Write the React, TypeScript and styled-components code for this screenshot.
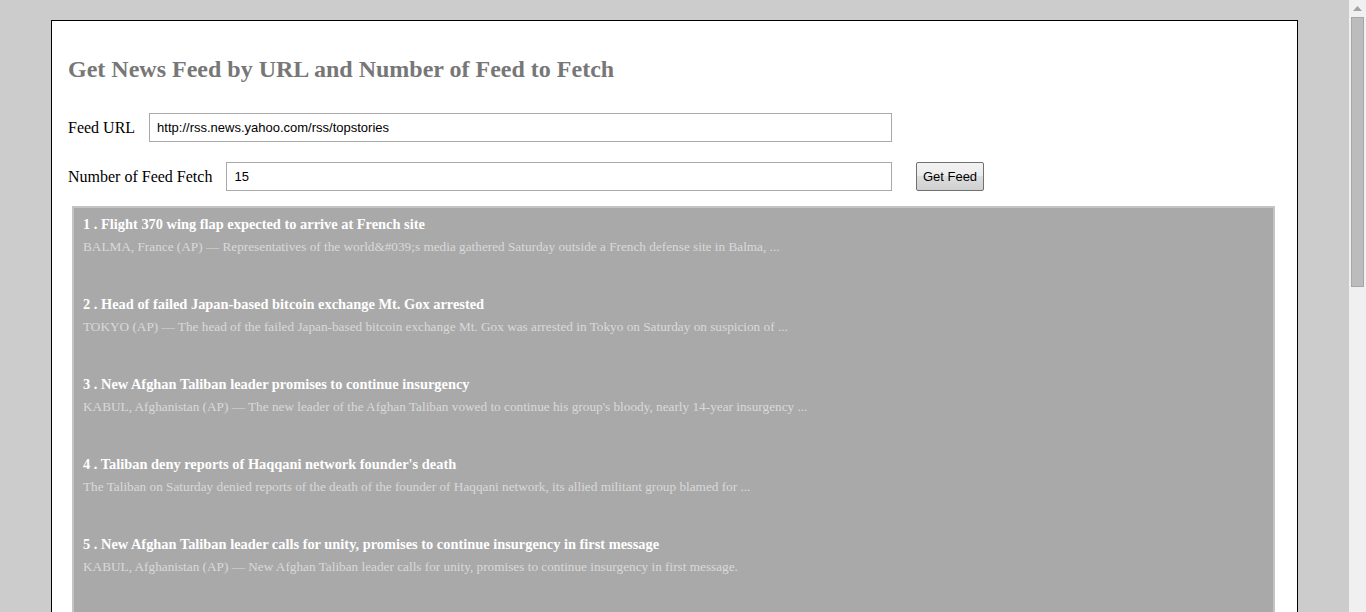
import React from "react";
import styled, { createGlobalStyle } from "styled-components";

const Global = createGlobalStyle`
  html, body { margin: 0; padding: 0; height: 612px; overflow: hidden; }
  body { font-family: "Liberation Serif", "Times New Roman", serif; }
`;

const Page = styled.div`
  display: flex;
  height: 612px;
  background: #cccccc;
  overflow: hidden;
`;

const Main = styled.div`
  flex: 1;
  display: flex;
  padding: 20px 51px 0 51px;
  min-width: 0;
`;

const Container = styled.div`
  flex: 1;
  background: #ffffff;
  border: 1px solid #000000;
  border-bottom: none;
  padding: 34px 22px 0 16px;
  display: flex;
  flex-direction: column;
  min-width: 0;
`;

const Heading = styled.h2`
  margin: 0 0 30px 0;
  font-size: 24px;
  line-height: 28px;
  font-weight: bold;
  color: #777777;
`;

const FormRow = styled.div<{ $mb?: number }>`
  display: flex;
  align-items: center;
  margin-bottom: ${(p) => p.$mb ?? 0}px;
`;

const Fields = styled.div<{ $gap: number }>`
  width: 824px;
  display: flex;
  align-items: center;
  gap: ${(p) => p.$gap}px;
`;

const Label = styled.label`
  font-size: 16px;
  color: #000;
  white-space: nowrap;
`;

const TextInput = styled.input`
  flex: 1;
  height: 29px;
  box-sizing: border-box;
  border: 1px solid #a9a9a9;
  padding: 0 7px;
  font-family: "Liberation Sans", Arial, sans-serif;
  font-size: 13px;
  color: #000;
  outline: none;
`;

const Button = styled.button`
  margin-left: 24px;
  width: 68px;
  height: 29px;
  box-sizing: border-box;
  border: 1px solid #707070;
  border-radius: 2px;
  background: linear-gradient(#f2f2f2, #ebebeb 50%, #dddddd 50%, #cfcfcf);
  font-family: "Liberation Sans", Arial, sans-serif;
  font-size: 13px;
  color: #000;
  padding: 0;
`;

const FeedBox = styled.div`
  margin: 15px 0 0 4px;
  flex: 1;
  background: #a9a9a9;
  border: 2px solid #c4c4c4;
  border-bottom: none;
  padding: 0 9px;
`;

const Item = styled.div`
  height: 80px;
  padding-top: 5px;
  box-sizing: border-box;
`;

const Title = styled.div`
  font-size: 14.4px;
  line-height: 22px;
  font-weight: bold;
  color: #ffffff;
`;

const Desc = styled.div`
  margin-top: 4px;
  font-size: 13.25px;
  line-height: 16px;
  color: #d9d9d9;
`;

const Scrollbar = styled.div`
  width: 17px;
  background: #f0f0f0;
  display: flex;
  flex-direction: column;
  align-items: center;
`;

const Arrow = styled.div`
  height: 17px;
  display: flex;
  align-items: center;
  justify-content: center;
`;

const Thumb = styled.div`
  width: 13px;
  height: 270px;
  box-sizing: border-box;
  background: #bcbcbc;
  border: 1px solid #a6a6a6;
`;

const items = [
  {
    t: "Flight 370 wing flap expected to arrive at French site",
    d: "BALMA, France (AP) \u2014 Representatives of the world&#039;s media gathered Saturday outside a French defense site in Balma, ...",
  },
  {
    t: "Head of failed Japan-based bitcoin exchange Mt. Gox arrested",
    d: "TOKYO (AP) \u2014 The head of the failed Japan-based bitcoin exchange Mt. Gox was arrested in Tokyo on Saturday on suspicion of ...",
  },
  {
    t: "New Afghan Taliban leader promises to continue insurgency",
    d: "KABUL, Afghanistan (AP) \u2014 The new leader of the Afghan Taliban vowed to continue his group's bloody, nearly 14-year insurgency ...",
  },
  {
    t: "Taliban deny reports of Haqqani network founder's death",
    d: "The Taliban on Saturday denied reports of the death of the founder of Haqqani network, its allied militant group blamed for ...",
  },
  {
    t: "New Afghan Taliban leader calls for unity, promises to continue insurgency in first message",
    d: "KABUL, Afghanistan (AP) \u2014 New Afghan Taliban leader calls for unity, promises to continue insurgency in first message.",
  },
];

export default function App() {
  return (
    <>
      <Global />
      <Page>
        <Main>
          <Container>
            <Heading>Get News Feed by URL and Number of Feed to Fetch</Heading>
            <FormRow $mb={20}>
              <Fields $gap={14}>
                <Label>Feed URL</Label>
                <TextInput defaultValue="http://rss.news.yahoo.com/rss/topstories" />
              </Fields>
            </FormRow>
            <FormRow>
              <Fields $gap={14}>
                <Label>Number of Feed Fetch</Label>
                <TextInput defaultValue="15" />
              </Fields>
              <Button>Get Feed</Button>
            </FormRow>
            <FeedBox>
              {items.map((it, i) => (
                <Item key={i}>
                  <Title>
                    {i + 1} . {it.t}
                  </Title>
                  <Desc>{it.d}</Desc>
                </Item>
              ))}
            </FeedBox>
          </Container>
        </Main>
        <Scrollbar>
          <Arrow>
            <svg width="9" height="5" viewBox="0 0 9 5">
              <polygon points="4.5,0 9,5 0,5" fill="#a3a3a3" />
            </svg>
          </Arrow>
          <Thumb />
        </Scrollbar>
      </Page>
    </>
  );
}
